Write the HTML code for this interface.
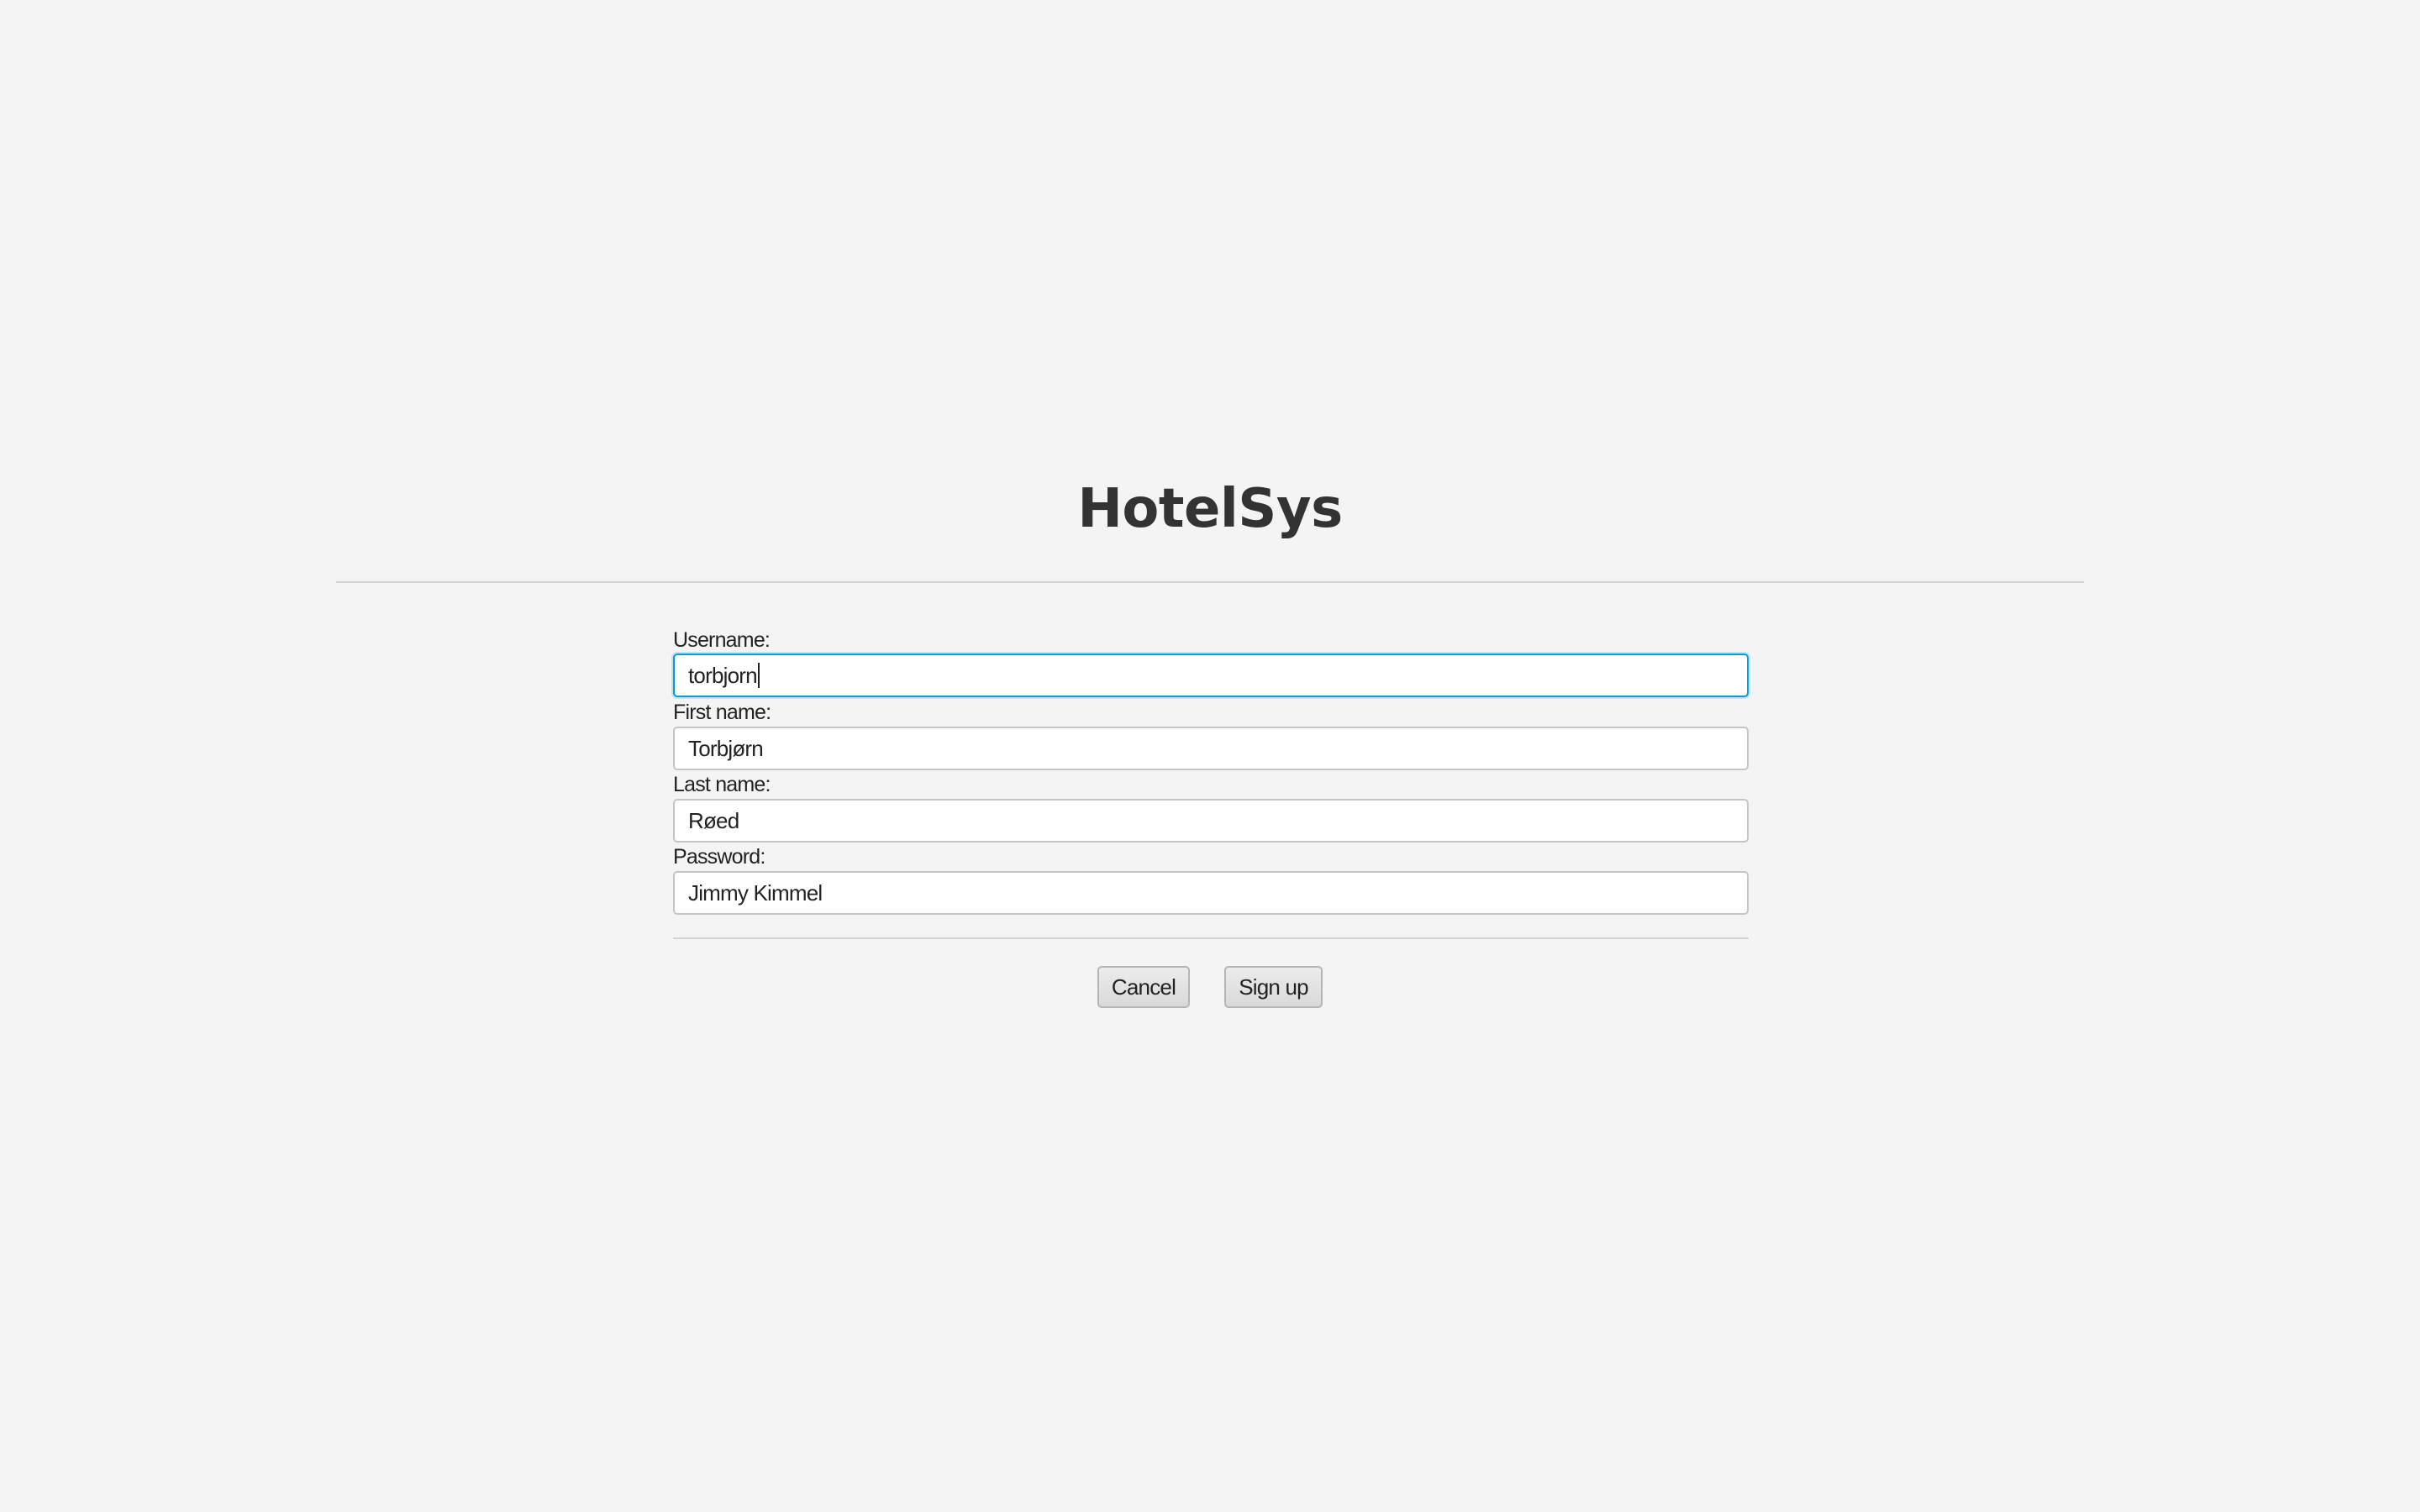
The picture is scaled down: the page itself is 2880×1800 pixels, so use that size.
<!DOCTYPE html>
<html><head><style>
body{margin:0;width:2880px;height:1800px;background:#f4f4f4;position:relative;font-family:"Liberation Sans",sans-serif;overflow:hidden}
.t{position:absolute;left:0;width:2880px;top:569px;text-align:center;font:bold 64px "DejaVu Sans",sans-serif;color:#333;letter-spacing:-0.5px}
.hr{position:absolute;height:2px;background:#d4d4d4}
.l{position:absolute;left:801px;font-size:25px;color:#222;letter-spacing:-0.8px}
.f{position:absolute;left:801px;width:1276px;height:48px;background:#fff;border:2px solid #c4c4c4;border-radius:5px;box-sizing:content-box}
.f span{position:absolute;left:16px;top:9px;font-size:26px;color:#222;letter-spacing:-0.8px}
.b{position:absolute;top:1150px;height:46px;border:2px solid #b5b5b5;border-radius:5px;background:linear-gradient(#ececec,#d9d9d9);font-size:26px;color:#222;text-align:center;line-height:46px;letter-spacing:-0.8px}
</style></head><body>
<div class="t">HotelSys</div>
<div class="hr" style="left:400px;width:2080px;top:692px"></div>
<div class="l" style="top:748px">Username:</div>
<div class="f" style="top:778px;border-color:#0b9ad6;box-shadow:0 0 0 2px #bfe3f3"><span>torbjorn<span style="position:static;border-left:2px solid #222;margin-left:1px"></span></span></div>
<div class="l" style="top:834px">First name:</div>
<div class="f" style="top:865px"><span>Torbjørn</span></div>
<div class="l" style="top:920px">Last name:</div>
<div class="f" style="top:951px"><span>Røed</span></div>
<div class="l" style="top:1006px">Password:</div>
<div class="f" style="top:1037px"><span>Jimmy Kimmel</span></div>
<div class="hr" style="left:801px;width:1280px;top:1116px"></div>
<div class="b" style="left:1306px;width:106px">Cancel</div>
<div class="b" style="left:1457px;width:113px">Sign up</div>
</body></html>
